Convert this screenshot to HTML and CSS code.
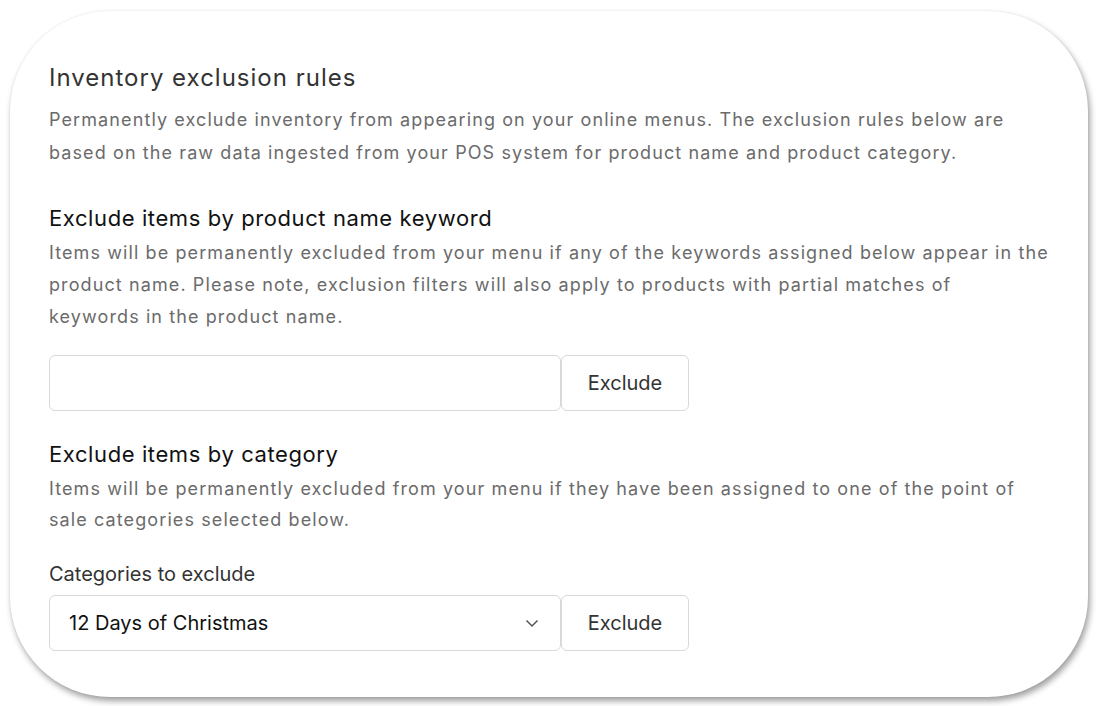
FILE: index.html
```html
<!DOCTYPE html>
<html>
<head>
	<title>Inventory exclusion rules</title>
	<meta charset="utf-8">
	<meta name="viewport" content="width=device-width,initial-scale=1.0">
	<link rel="stylesheet" href="styles.css">
</head>
<body>
<div class="card">
	<h2 class="title">Inventory exclusion rules</h2>
	<p class="desc">Permanently exclude inventory from appearing on your online menus. The exclusion rules below are based on the raw data ingested from your POS system for product name and product category.</p>

	<!-- keyword -->
	<div class="section">
		<h3 class="sub">Exclude items by product name keyword</h3>
		<p class="desc">Items will be permanently excluded from your menu if any of the keywords assigned below appear in the product name. Please note, exclusion filters will also apply to products with partial matches of<br>keywords in the product name.</p>
		<div class="group">
			<input class="field" type="text">
			<button class="btn">Exclude</button>
		</div>
	</div>

	<!-- category -->
	<div class="section section-cat">
		<h3 class="sub">Exclude items by category</h3>
		<p class="desc desc-cat">Items will be permanently excluded from your menu if they have been assigned to one of the point of sale categories selected below.</p>
		<label class="label">Categories to exclude</label>
		<div class="group">
			<div class="field select">
				<span>12 Days of Christmas</span>
				<svg width="14" height="9" viewBox="0 0 14 9"><path d="M1.5 1.5 L7 7 L12.5 1.5" fill="none" stroke="#555" stroke-width="1.5"/></svg>
			</div>
			<button class="btn">Exclude</button>
		</div>
	</div>
</div>
</body>
</html>
```

FILE: styles.css
```css
body {
	margin: 0;
	padding: 11px 10px 9px 10px;
	background: #fff;
	font-family: Inter, "Noto Sans", sans-serif;
}
.card {
	background: #fff;
	border-radius: 100px;
	box-shadow: 2px 4px 6px rgba(0, 0, 0, 0.38), 0 0 2px rgba(0, 0, 0, 0.08);
	padding: 52px 30px 46px 39px;
	height: 686px;
	box-sizing: border-box;
}
.title {
	margin: 0;
	font-size: 24px;
	line-height: 30px;
	font-weight: 400;
	letter-spacing: 1px;
	color: #333;
}
.desc {
	margin: 10px 0 0 0;
	font-size: 18px;
	line-height: 33px;
	letter-spacing: 1.1px;
	color: #6b6b6b;
}
.section {
	margin-top: 34px;
}
.sub {
	margin: 0;
	font-size: 22px;
	line-height: 30px;
	font-weight: 400;
	letter-spacing: 0.6px;
	color: #111;
}
.section .desc {
	margin-top: 4px;
	line-height: 32px;
}
.section-cat {
	margin-top: 28px;
}
.section .desc-cat {
	line-height: 31px;
}
.group {
	display: flex;
	margin-top: 22px;
}
.field {
	width: 512px;
	height: 56px;
	box-sizing: border-box;
	border: 1px solid #d9d9d9;
	border-radius: 6px;
	background: #fff;
	font: inherit;
	margin: 0;
}
.select {
	display: flex;
	align-items: center;
	justify-content: space-between;
	padding: 0 21px 0 19px;
	font-size: 20px;
	color: #111;
}
.btn {
	width: 128px;
	height: 56px;
	border: 1px solid #d9d9d9;
	border-radius: 6px;
	background: #fff;
	font-family: inherit;
	font-size: 20px;
	color: #333;
	margin: 0;
}
.label {
	display: block;
	margin-top: 26px;
	font-size: 20px;
	line-height: 26px;
	color: #333;
}
.label + .group {
	margin-top: 8px;
}
```
